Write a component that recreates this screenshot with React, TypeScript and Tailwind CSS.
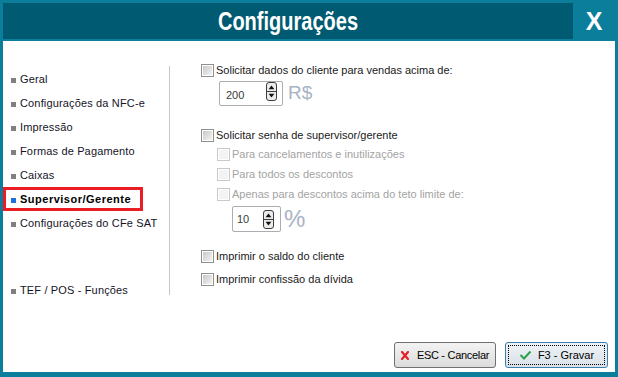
import React from "react";

const F = "font-['Liberation_Sans',Arial,sans-serif]";

function Check({ disabled = false }: { disabled?: boolean }) {
  return (
    <span
      className={`flex h-[13px] w-[13px] shrink-0 border p-[1px] ${
        disabled ? "border-[#c9c9c9] bg-white" : "border-[#8e8f8f] bg-white"
      }`}
    >
      <span
        className={`block h-full w-full ${
          disabled
            ? "bg-[#f3f3f3]"
            : "bg-gradient-to-br from-[#c9c9c9] to-[#f3f3f3]"
        }`}
      />
    </span>
  );
}

function Spin() {
  return (
    <svg width="11" height="19" viewBox="0 0 11 19" className="shrink-0">
      <rect x="0.5" y="0.5" width="10" height="18" rx="2.5" fill="#ececec" stroke="#3d3d3d" />
      <line x1="1" y1="9.5" x2="10" y2="9.5" stroke="#3d3d3d" />
      <path d="M2.6 7.2 L5.5 3.6 L8.4 7.2 Z" fill="#111" />
      <path d="M2.6 11.8 L5.5 15.4 L8.4 11.8 Z" fill="#111" />
    </svg>
  );
}

function Row({
  label,
  disabled = false,
  className = "",
}: {
  label: string;
  disabled?: boolean;
  className?: string;
}) {
  return (
    <div className={`flex h-[20px] items-center gap-[2px] ${className}`}>
      <Check disabled={disabled} />
      <span className={`text-[11px] ${disabled ? "text-[#a3a3a3]" : "text-[#1a1a1a]"}`}>{label}</span>
    </div>
  );
}

const items = [
  "Geral",
  "Configurações da NFC-e",
  "Impressão",
  "Formas de Pagamento",
  "Caixas",
  "Supervisor/Gerente",
  "Configurações do CFe SAT",
];

function Item({ label, active = false, className = "" }: { label: string; active?: boolean; className?: string }) {
  return (
    <div
      className={`flex h-[24px] w-[140px] shrink-0 items-center gap-[4px] border-[3px] pl-[5px] ${
        active ? "border-[#ec1c24]" : "border-transparent"
      } ${className}`}
    >
      <span className={`mt-[2px] h-[5px] w-[5px] shrink-0 ${active ? "bg-[#1d6fdb]" : "bg-[#808080]"}`} />
      <span
        className={`whitespace-nowrap text-[11px] tracking-[0.15px] ${
          active ? "font-bold !tracking-[0.5px] text-black" : "text-[#141428]"
        }`}
      >
        {label}
      </span>
    </div>
  );
}

export default function App() {
  return (
    <div className={`flex h-[377px] w-[618px] flex-col bg-[#0a7e9b] pb-[5px] pl-[3px] pr-[3px] pt-[3px] ${F}`}>
      <div className="flex h-[36px] shrink-0">
        <div className="flex flex-1 items-center justify-center bg-[#005a71]">
          <span className="inline-block scale-x-[0.77] text-[26px] font-bold leading-none text-white">
            Configurações
          </span>
        </div>
        <div className="flex w-[42px] items-center justify-center text-[25px] font-bold leading-none text-white">
          X
        </div>
      </div>

      <div className="mt-[2px] flex flex-1 flex-col bg-white">
        <div className="flex flex-1">
          <div className="mt-[25px] flex h-[229px] w-[167px] shrink-0 flex-col border-r border-[#c6c6c6] pt-[1px]">
            {items.map((it) => (
              <Item key={it} label={it} active={it === "Supervisor/Gerente"} />
            ))}
            <Item label="TEF / POS - Funções" className="mt-[43px]" />
          </div>

          <div className="flex flex-col pl-[31px] pt-[19px]">
            <Row label="Solicitar dados do cliente para vendas acima de:" />
            <div className="ml-[18px] mt-[1px] flex h-[25px] items-start">
              <div className="flex h-[25px] w-[64px] items-start rounded-[2px] border border-[#abadb3] bg-white">
                <span className="pl-[6px] pt-[5px] text-[11px] text-[#3a3a3a]">200</span>
                <span className="ml-auto mr-[5px] pt-[0px]">
                  <Spin />
                </span>
              </div>
              <span className="ml-[5px] pt-[1px] text-[19px] leading-[22px] text-[#a8b3c3]">R$</span>
            </div>

            <Row label="Solicitar senha de supervisor/gerente" className="mt-[20px] !h-[18px]" />
            <Row label="Para cancelamentos e inutilizações" disabled className="ml-[16px]" />
            <Row label="Para todos os descontos" disabled className="ml-[16px]" />
            <Row label="Apenas para descontos acima do teto limite de:" disabled className="ml-[16px]" />
            <div className="ml-[31px] mt-[2px] flex h-[26px] items-center">
              <div className="flex h-[26px] w-[49px] items-center rounded-[2px] border border-[#abadb3] bg-white">
                <span className="pl-[4px] text-[11px] text-[#3a3a3a]">10</span>
                <span className="ml-auto mr-[6px] flex">
                  <Spin />
                </span>
              </div>
              <span className="ml-[3px] text-[24px] leading-none text-[#a8b3c3]">%</span>
            </div>

            <Row label="Imprimir o saldo do cliente" className="mt-[14px]" />
            <Row label="Imprimir confissão da dívida" className="mt-[3px]" />
          </div>
        </div>

        <div className="flex shrink-0 justify-end gap-[9px] pb-[4px] pr-[7px]">
          <button className="flex h-[26px] w-[102px] items-center justify-center gap-[8px] rounded-[3px] border border-[#707070] bg-gradient-to-b from-[#f3f3f3] to-[#dcdcdc] text-[11px] tracking-[-0.3px] text-black">
            <svg width="8" height="9" viewBox="0 0 8 9">
              <path d="M1 1 L7 8 M7 1 L1 8" stroke="#e3202a" strokeWidth="2.2" strokeLinecap="square" />
            </svg>
            <span>ESC - Cancelar</span>
          </button>
          <button className="flex h-[26px] w-[103px] items-center justify-center rounded-[3px] border border-[#3c7fb1] bg-gradient-to-b from-[#eef3f6] to-[#d9e1e7] p-[2px]">
            <span className="flex h-full w-full items-center justify-center gap-[6px] border border-dotted border-black text-[11px] text-black">
              <svg width="13" height="10" viewBox="0 0 13 10">
                <path d="M1.5 5 L5 8.5 L11.5 1.5" fill="none" stroke="#2e9e47" strokeWidth="2" />
              </svg>
              <span>F3 - Gravar</span>
            </span>
          </button>
        </div>
      </div>
    </div>
  );
}
